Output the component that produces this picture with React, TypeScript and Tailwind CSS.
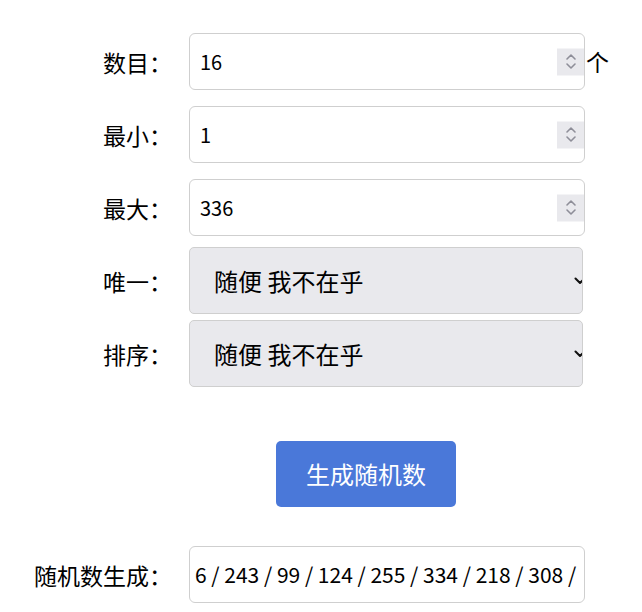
const font = "font-['Noto_Sans_CJK_SC',sans-serif]";

function Spinner() {
  return (
    <div className="absolute right-0 top-1/2 -translate-y-1/2 w-[27px] h-[27px] bg-[#e9e9ed] flex items-center justify-center">
      <svg width="12" height="20" viewBox="0 0 12 20" fill="none">
        <path d="M2 7.5 L6 3.5 L10 7.5" stroke="#8e8e98" strokeWidth="1.6" strokeLinecap="round" strokeLinejoin="round" />
        <path d="M2 12.5 L6 16.5 L10 12.5" stroke="#8e8e98" strokeWidth="1.6" strokeLinecap="round" strokeLinejoin="round" />
      </svg>
    </div>
  );
}

function Label({ text }: { text: string }) {
  return <div className="w-[172px] shrink-0 text-right text-[23px] leading-[30px] text-black">{text}</div>;
}

function NumberRow({ label, value, unit }: { label: string; value: string; unit?: string }) {
  return (
    <div className="flex items-center">
      <Label text={label} />
      <div className="ml-[17px] relative w-[396px] h-[57px] border border-[#cfcfcf] rounded-[6px] bg-white overflow-hidden flex items-center pl-[10px]">
        <span className="text-[20px] text-black">{value}</span>
        <Spinner />
      </div>
      {unit && <span className="ml-[1px] text-[23px] text-black">{unit}</span>}
    </div>
  );
}

function SelectRow({ label }: { label: string }) {
  return (
    <div className="flex items-center">
      <Label text={label} />
      <div className="ml-[17px] relative w-[394px] h-[67px] border border-[#cfcfcf] rounded-[5px] bg-[#e9e9ed] overflow-hidden flex items-center pl-[24px]">
        <span className="text-[24px] text-black">随便 我不在乎</span>
        <svg className="absolute right-[-4px] top-1/2 -translate-y-1/2" width="12" height="8" viewBox="0 0 12 8" fill="none">
          <path d="M1.5 1.5 L6 6 L10.5 1.5" stroke="#111" strokeWidth="2" strokeLinecap="round" strokeLinejoin="round" />
        </svg>
      </div>
    </div>
  );
}

export default function App() {
  return (
    <div className={`w-[642px] h-[612px] bg-white ${font}`}>
      <div className="flex flex-col pt-[33px]">
        <NumberRow label="数目：" value="16" unit="个" />
        <div className="h-[16px]" />
        <NumberRow label="最小：" value="1" />
        <div className="h-[16px]" />
        <NumberRow label="最大：" value="336" />
        <div className="h-[11px]" />
        <SelectRow label="唯一：" />
        <div className="h-[6px]" />
        <SelectRow label="排序：" />
        <div className="ml-[276px] mt-[54px] w-[180px] h-[66px] rounded-[5px] bg-[#4a78d9] flex items-center justify-center">
          <span className="text-[24px] text-white">生成随机数</span>
        </div>
        <div className="flex items-center mt-[39px]">
          <Label text="随机数生成：" />
          <div className="ml-[17px] w-[396px] h-[57px] border border-[#cfcfcf] rounded-[6px] bg-white overflow-hidden flex items-center pl-[5px]">
            <span className="text-[21px] text-black whitespace-nowrap">6 / 243 / 99 / 124 / 255 / 334 / 218 / 308 /</span>
          </div>
        </div>
      </div>
    </div>
  );
}
